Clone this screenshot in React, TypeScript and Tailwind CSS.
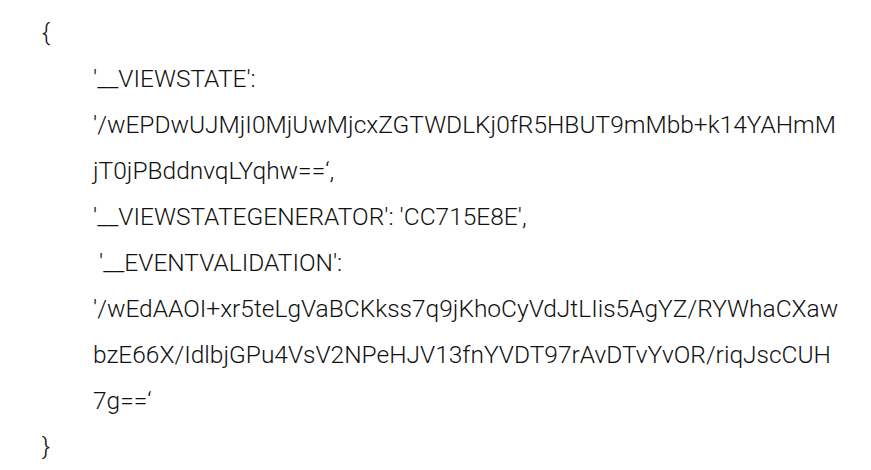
import React from 'react';

const lines: { text: string; indent: boolean }[] = [
  { text: '{', indent: false },
  { text: "'__VIEWSTATE':", indent: true },
  { text: "'/wEPDwUJMjI0MjUwMjcxZGTWDLKj0fR5HBUT9mMbb+k14YAHmM", indent: true },
  { text: 'jT0jPBddnvqLYqhw==‘,', indent: true },
  { text: "'__VIEWSTATEGENERATOR': 'CC715E8E',", indent: true },
  { text: " '__EVENTVALIDATION':", indent: true },
  { text: "'/wEdAAOI+xr5teLgVaBCKkss7q9jKhoCyVdJtLIis5AgYZ/RYWhaCXaw", indent: true },
  { text: 'bzE66X/IdlbjGPu4VsV2NPeHJV13fnYVDT97rAvDTvYvOR/riqJscCUH', indent: true },
  { text: '7g==‘', indent: true },
  { text: '}', indent: false },
];

const App: React.FC = () => {
  return (
    <div className="w-[871px] h-[470px] bg-white pl-[42px] pt-[10px] overflow-hidden">
      {/* form fields dump */}
      <div className="font-['Roboto',sans-serif] font-light text-[24.5px] leading-[46px] text-[#111]">
        {lines.map((line, i) => (
          <div key={i} className={line.indent ? 'pl-[51px] whitespace-pre' : 'whitespace-pre'}>
            {line.text}
          </div>
        ))}
      </div>
    </div>
  );
};

export default App;
